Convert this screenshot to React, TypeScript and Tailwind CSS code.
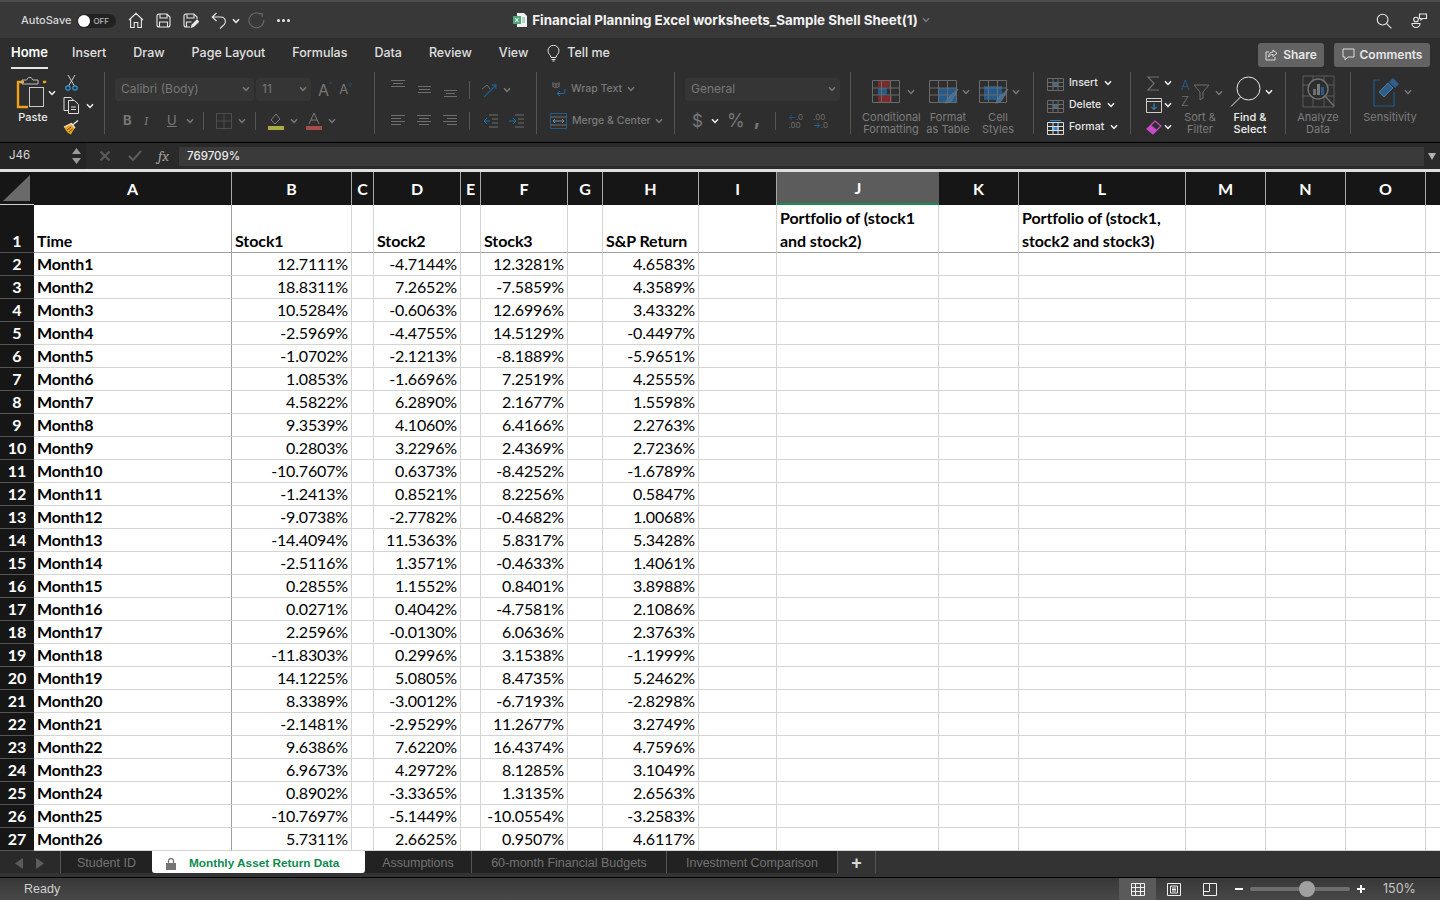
import type { ReactNode } from 'react';

const UI = "font-['Inter',sans-serif]";
const CELL_FONT = "font-['Lato',sans-serif]";

const COLS = [
  { name: 'A', w: 198 },
  { name: 'B', w: 120 },
  { name: 'C', w: 22 },
  { name: 'D', w: 87 },
  { name: 'E', w: 20 },
  { name: 'F', w: 87 },
  { name: 'G', w: 35 },
  { name: 'H', w: 96 },
  { name: 'I', w: 78 },
  { name: 'J', w: 162 },
  { name: 'K', w: 80 },
  { name: 'L', w: 167 },
  { name: 'M', w: 80 },
  { name: 'N', w: 80 },
  { name: 'O', w: 80 },
  { name: '', w: 15 },
];

const DATA: string[][] = [
  ['12.7111', '-4.7144', '12.3281', '4.6583'],
  ['18.8311', '7.2652', '-7.5859', '4.3589'],
  ['10.5284', '-0.6063', '12.6996', '3.4332'],
  ['-2.5969', '-4.4755', '14.5129', '-0.4497'],
  ['-1.0702', '-2.1213', '-8.1889', '-5.9651'],
  ['1.0853', '-1.6696', '7.2519', '4.2555'],
  ['4.5822', '6.2890', '2.1677', '1.5598'],
  ['9.3539', '4.1060', '6.4166', '2.2763'],
  ['0.2803', '3.2296', '2.4369', '2.7236'],
  ['-10.7607', '0.6373', '-8.4252', '-1.6789'],
  ['-1.2413', '0.8521', '8.2256', '0.5847'],
  ['-9.0738', '-2.7782', '-0.4682', '1.0068'],
  ['-14.4094', '11.5363', '5.8317', '5.3428'],
  ['-2.5116', '1.3571', '-0.4633', '1.4061'],
  ['0.2855', '1.1552', '0.8401', '3.8988'],
  ['0.0271', '0.4042', '-4.7581', '2.1086'],
  ['2.2596', '-0.0130', '6.0636', '2.3763'],
  ['-11.8303', '0.2996', '3.1538', '-1.1999'],
  ['14.1225', '5.0805', '8.4735', '5.2462'],
  ['8.3389', '-3.0012', '-6.7193', '-2.8298'],
  ['-2.1481', '-2.9529', '11.2677', '3.2749'],
  ['9.6386', '7.6220', '16.4374', '4.7596'],
  ['6.9673', '4.2972', '8.1285', '3.1049'],
  ['0.8902', '-3.3365', '1.3135', '2.6563'],
  ['-10.7697', '-5.1449', '-10.0554', '-3.2583'],
  ['5.7311', '2.6625', '0.9507', '4.6117'],
];

const HEADERS: Record<string, string> = {
  A: 'Time',
  B: 'Stock1',
  D: 'Stock2',
  F: 'Stock3',
  H: 'S&P Return',
  J: 'Portfolio of (stock1 and stock2)',
  L: 'Portfolio of (stock1, stock2 and stock3)',
};

const RIBBON_TABS = ['Home', 'Insert', 'Draw', 'Page Layout', 'Formulas', 'Data', 'Review', 'View'];

function Chev({ on = false, className = '' }: { on?: boolean; className?: string }) {
  return (
    <svg width="8" height="6" viewBox="0 0 8 6" fill="none" className={className}>
      <path d="M1 1.2 4 4.4 7 1.2" stroke={on ? '#f0f0f0' : '#7a7a7a'} strokeWidth="1.5" />
    </svg>
  );
}

function Sep({ className = 'h-[62px]' }: { className?: string }) {
  return <div className={`w-px shrink-0 bg-[#555555] ${className}`} />;
}

function Lines({ rows, color = '#6e6e6e' }: { rows: number[][]; color?: string }) {
  return (
    <svg width="16" height="14" viewBox="0 0 16 14" fill="none" stroke={color}>
      {rows.map((r, i) => (
        <path key={i} d={`M${r[0]} ${r[2]}.5H${r[1]}`} />
      ))}
    </svg>
  );
}

function RibbonLabel({ children, on = false, className = '' }: { children: ReactNode; on?: boolean; className?: string }) {
  return (
    <div className={`text-center text-[11px] leading-[12px] ${on ? 'font-medium text-[#f0f0f0]' : 'text-[#7d7d7d]'} ${className}`}>
      {children}
    </div>
  );
}

function TitleBar() {
  return (
    <div className="flex h-[38px] shrink-0 items-center border-t-2 border-[#4c4c4c] bg-[#383838] pt-px text-[#e4e4e4]">
      <div className="flex flex-1 items-center pl-[21px]">
        <span className="text-[11px] font-medium text-[#d8d8d8]">AutoSave</span>
        <div className="ml-[6px] flex h-[14px] w-[39px] items-center rounded-full bg-[#222222] pl-px">
          <div className="h-[12px] w-[12px] rounded-full bg-white" />
          <span className="ml-[3px] text-[8px] font-medium text-[#bcbcbc]">OFF</span>
        </div>
        <svg width="16" height="17" viewBox="0 0 16 17" fill="none" stroke="#e8e8e8" strokeWidth="1.1" className="ml-[12px]">
          <path d="M1 8 8 1.3 15 8M2.6 7v8.500h3.600v-5h3.600v5h3.600V7" />
        </svg>
        <svg width="15" height="15" viewBox="0 0 15 15" fill="none" stroke="#e8e8e8" strokeWidth="1.1" className="ml-[12px]">
          <path d="M1 3a2 2 0 0 1 2-2h8l3 3v8a2 2 0 0 1-2 2H3a2 2 0 0 1-2-2zM4 1v4h7V1M3.500 14V9h8v5" />
        </svg>
        <svg width="16" height="15" viewBox="0 0 16 15" fill="none" stroke="#e8e8e8" strokeWidth="1.1" className="ml-[12px]">
          <path d="M7 14H3a2 2 0 0 1-2-2V3a2 2 0 0 1 2-2h8l3 3v2M4 1v4h7V1M3.500 14V9h5" />
          <path d="M8.500 14.200 9 12l5-5 1.600 1.600-5 5z" fill="#e8e8e8" />
        </svg>
        <svg width="16" height="17" viewBox="0 0 16 17" fill="none" stroke="#e8e8e8" strokeWidth="1.1" className="ml-[12px]">
          <path d="M5.500 1 1.200 5l4.300 4M1.500 5H10a4.500 4.500 0 0 1 3.400 7.400L9 16.500" />
        </svg>
        <Chev on className="ml-[5px]" />
        <svg width="17" height="17" viewBox="0 0 17 17" fill="none" stroke="#6a6a6a" strokeWidth="1.1" className="ml-[8px]">
          <path d="M12.500 2.200A7.400 7.400 0 1 0 15.800 8M10.500 1.500h3.600v3.700" />
        </svg>
        <div className="ml-[12px] flex gap-[2px]">
          <div className="h-[3px] w-[3px] rounded-full bg-[#e8e8e8]" />
          <div className="h-[3px] w-[3px] rounded-full bg-[#e8e8e8]" />
          <div className="h-[3px] w-[3px] rounded-full bg-[#e8e8e8]" />
        </div>
      </div>
      <div className="flex items-center pr-[6px]">
        <svg width="14" height="14" viewBox="0 0 14 14">
          <path d="M4 0h7l3 3v11H4z" fill="#f2f2f2" />
          <rect x="0" y="3" width="8" height="8" fill="#4fa57c" />
          <path d="M2 5l3.500 4M5.500 5 2 9" stroke="#fff" />
          <path d="M9 5h3M9 7h3M9 9h3" stroke="#6fb592" />
        </svg>
        <span className="ml-[5px] text-[13.4px] font-bold text-[#f2f2f2]">
          Financial Planning Excel worksheets_Sample Shell Sheet(1)
        </span>
        <Chev className="ml-[4px]" />
      </div>
      <div className="flex flex-1 items-center justify-end pr-[12px]">
        <svg width="16" height="16" viewBox="0 0 16 16" fill="none" stroke="#e8e8e8" strokeWidth="1.1">
          <circle cx="6.600" cy="6.600" r="5.400" />
          <path d="m10.600 10.600 4.800 4.800" />
        </svg>
        <svg width="17" height="17" viewBox="0 0 17 17" fill="none" stroke="#e8e8e8" strokeWidth="1.1" className="ml-[19px]">
          <circle cx="5" cy="7.500" r="2.300" />
          <path d="M1 11.500h8a4 4 0 0 1-8 0zM8.500 2h7v4.500h-4l-1.600 1.400V6.500H8.500z" />
        </svg>
      </div>
    </div>
  );
}

function TabsRow() {
  return (
    <div className="flex h-[30px] shrink-0 items-center bg-[#2e2e2e] pl-[11px] pr-[10px] text-[12.5px] font-medium text-[#e0e0e0]">
      {RIBBON_TABS.map((t, i) => (
        <div key={t} className={`relative ${i === 0 ? 'mr-[24px] text-[13px] font-semibold text-white' : i === 7 ? 'mr-[19px]' : 'mr-[27px]'}`}>
          {t}
          {i === 0 && <div className="absolute -bottom-[6px] left-0 h-[2px] w-full bg-[#e4e4e4]" />}
        </div>
      ))}
      <svg width="13" height="17" viewBox="0 0 13 17" fill="none" stroke="#e0e0e0">
        <path d="M4 12.500C4 10 1 9 1 5.800a5.500 5.500 0 0 1 11 0C12 9 9 10 9 12.500zM4.500 14.500h4M5.500 16h2" />
      </svg>
      <span className="ml-[7px]">Tell me</span>
      <div className="ml-auto flex items-center gap-[10px] pt-[3px]">
        <div className="flex h-[24px] w-[66px] items-center justify-center gap-[5px] rounded-[3px] bg-[#636363] text-[12px] font-semibold text-[#e6e6e6]">
          <svg width="13" height="12" viewBox="0 0 13 12" fill="none" stroke="#dcdcdc">
            <path d="M4 3H1v8h9V8M8 1l4 3.200L8 7.500V5.500C5.500 5.500 4.500 6.500 3.500 8.200 3.500 5.500 5 3 8 3z" />
          </svg>
          Share
        </div>
        <div className="flex h-[24px] w-[96px] items-center justify-center gap-[5px] rounded-[3px] bg-[#636363] text-[12px] font-semibold text-[#e6e6e6]">
          <svg width="13" height="13" viewBox="0 0 13 13" fill="none" stroke="#dcdcdc">
            <path d="M1 1h11v8H6l-3 3V9H1z" />
          </svg>
          Comments
        </div>
      </div>
    </div>
  );
}

function Clipboard() {
  return (
    <div className="flex w-[104px] shrink-0 pl-[16px]">
      <div className="flex w-[46px] flex-col pt-[4px]">
        <div className="flex items-center">
          <svg width="33" height="33" viewBox="0 0 33 33" fill="none">
            <path d="M8 6H2v25h10" stroke="#eea21a" strokeWidth="2.400" />
            <path d="M27 6h2v1" stroke="#eea21a" strokeWidth="2.400" />
            <path d="M6 8V4h4.500l2-2.500h2.500l2 2.500h5v4z" stroke="#bdbdbd" />
            <rect x="13.500" y="11.500" width="14" height="19" stroke="#c8c8c8" fill="#2d2d2d" />
          </svg>
          <Chev on className="-ml-[1px]" />
        </div>
        <div className="w-[34px] text-center text-[11px] font-medium text-[#ececec]">Paste</div>
      </div>
      <div className="flex flex-col gap-[6px] pl-[1px] pt-[3px]">
        <svg width="18" height="16" viewBox="0 0 18 16" fill="none">
          <path d="M5 0l6.500 11M12 0 5.500 11" stroke="#d0d0d0" />
          <circle cx="5" cy="13" r="2.200" stroke="#2f9ae0" strokeWidth="1.200" />
          <circle cx="12" cy="13" r="2.200" stroke="#2f9ae0" strokeWidth="1.200" />
        </svg>
        <div className="flex items-center">
          <svg width="18" height="17" viewBox="0 0 18 17" fill="none" stroke="#dcdcdc">
            <path d="M5.500 13.500H1V.5h7l2 2.500M5.500 3.500h6l4 4v9h-10zM8 10h5M8 12.500h5" />
          </svg>
          <Chev on className="ml-[5px]" />
        </div>
        <svg width="16" height="15" viewBox="0 0 16 15" fill="none">
          <path d="M1 7 8.500 3.500 12 8c-2 2.500-3 4.500-4 6.500C5 13.500 3 11 1 7z" fill="#eea21a" />
          <path d="M1 7 8.500 3.500 12 8M9.500 5 15 .5" stroke="#e6e6e6" strokeWidth="1.300" />
          <path d="M4 10l4-3M6 12l3.500-3" stroke="#2d2d2d" strokeWidth=".8" />
        </svg>
      </div>
    </div>
  );
}

function FontGroup() {
  return (
    <div className="flex w-[259px] shrink-0 flex-col pt-[6px] text-[#787878]">
      <div className="flex items-center">
        <div className="flex h-[23px] w-[139px] items-center justify-between rounded-[3px] bg-[#353535] pb-px pl-[6px] pr-[4px] text-[12px]">
          Calibri (Body) <Chev />
        </div>
        <div className="ml-[2px] flex h-[23px] w-[55px] items-center justify-between rounded-[3px] bg-[#353535] pb-px pl-[6px] pr-[4px] text-[12px]">
          11 <Chev />
        </div>
        <span className="ml-[7px] text-[16px] leading-none">A</span>
        <span className="-mt-[8px] text-[7px] text-[#1f5c8a]">^</span>
        <span className="ml-[7px] text-[13px] leading-none">A</span>
        <span className="-mt-[8px] text-[7px] text-[#1f5c8a]">v</span>
      </div>
      <div className="mt-[11px] flex h-[18px] items-center text-[13px]">
        <span className="ml-[8px] w-[15px] font-bold">B</span>
        <span className="ml-[6px] w-[15px] font-serif italic">I</span>
        <span className="ml-[8px] underline">U</span>
        <Chev className="ml-[9px]" />
        <Sep className="ml-[9px] h-[18px]" />
        <svg width="16" height="16" viewBox="0 0 16 16" fill="none" stroke="#6a6a6a" strokeDasharray="1 1" className="ml-[12px]">
          <path d="M.5.5h15v15H.5zM8 .5v15M.5 8h15" />
        </svg>
        <Chev className="ml-[6px]" />
        <Sep className="ml-[9px] h-[18px]" />
        <svg width="16" height="18" viewBox="0 0 16 18" fill="none" className="ml-[12px]">
          <path d="m3 8 5-6 4 5-5 5z" stroke="#7a7a7a" />
          <rect y="14" width="16" height="4" fill="#aeab45" />
        </svg>
        <Chev className="ml-[6px]" />
        <svg width="16" height="18" viewBox="0 0 16 18" className="ml-[8px]">
          <path d="M3 12 8 1l5 11M5 8h6" fill="none" stroke="#7a7a7a" />
          <rect y="14" width="16" height="4" fill="#ad4a4a" />
        </svg>
        <Chev className="ml-[6px]" />
      </div>
    </div>
  );
}

function AlignGroup() {
  return (
    <div className="flex w-[151px] shrink-0 flex-col pl-[5px] pt-[6px]">
      <div className="flex h-[23px] items-center">
        <div className="-mt-[8px]"><Lines rows={[[1, 15, 1], [3, 13, 4], [1, 15, 7]]} /></div>
        <div className="ml-[10px]"><Lines rows={[[2, 15, 3], [3, 14, 6], [2, 15, 9]]} /></div>
        <div className="ml-[10px] mt-[4px]"><Lines rows={[[2, 15, 5], [4, 13, 8], [2, 15, 11]]} /></div>
        <Sep className="ml-[11px] h-[18px]" />
        <svg width="17" height="16" viewBox="0 0 17 16" fill="none" className="ml-[11px]">
          <path d="M1 7l5-4 3 4" stroke="#6e6e6e" />
          <path d="M3 15 15 3M11 3h4v4" stroke="#1f5c8a" strokeWidth="1.300" />
        </svg>
        <Chev className="ml-[5px]" />
      </div>
      <div className="mt-[11px] flex h-[18px] items-center">
        <Lines rows={[[1, 15, 1], [1, 11, 4], [1, 15, 7], [1, 11, 10]]} />
        <div className="ml-[10px]"><Lines rows={[[1, 15, 1], [3, 13, 4], [1, 15, 7], [3, 13, 10]]} /></div>
        <div className="ml-[10px]"><Lines rows={[[1, 15, 1], [5, 15, 4], [1, 15, 7], [5, 15, 10]]} /></div>
        <Sep className="ml-[11px] h-[18px]" />
        <svg width="15" height="14" viewBox="0 0 15 14" fill="none" className="ml-[13px]">
          <path d="M6 1h9M9 5h6M9 9h6M6 13h9" stroke="#6e6e6e" />
          <path d="M7 7H1M4 4 1 7l3 3" stroke="#1f6fa8" />
        </svg>
        <svg width="15" height="14" viewBox="0 0 15 14" fill="none" className="ml-[11px]">
          <path d="M6 1h9M9 5h6M9 9h6M6 13h9" stroke="#6e6e6e" />
          <path d="M0 7h6M4 4l3 3-3 3" stroke="#1f6fa8" />
        </svg>
      </div>
    </div>
  );
}

function WrapGroup() {
  return (
    <div className="flex w-[124px] shrink-0 flex-col pt-[7px] text-[10.5px] font-medium text-[#7a7a7a]">
      <div className="flex h-[20px] items-center">
        <svg width="16" height="16" viewBox="0 0 16 16" fill="none" className="ml-[1px]">
          <path d="M2 6V1M2 4a2 2 0 1 1 0 1M8 1v5M8 4a2 2 0 1 0 0 1" stroke="#6e6e6e" />
          <path d="M14 8v2.500a2 2 0 0 1-2 2H7M9 10l-3 2.500L9 15" stroke="#1f6fa8" />
        </svg>
        <span className="ml-[4px]">Wrap Text</span>
        <Chev className="ml-[5px]" />
      </div>
      <div className="mt-[12px] flex h-[20px] items-center">
        <svg width="17" height="16" viewBox="0 0 17 16" fill="none">
          <path d="M.5.500h16v15H.5z" stroke="#1f5c8a" />
          <path d="M.5 4h16M.5 12h16" stroke="#6e6e6e" />
          <path d="M3 8h11M5 6 3 8l2 2M12 6l2 2-2 2" stroke="#6e8fa8" />
        </svg>
        <span className="ml-[5px]">Merge & Center</span>
        <Chev className="ml-[4px]" />
      </div>
    </div>
  );
}

function NumberGroup() {
  return (
    <div className="flex w-[165px] shrink-0 flex-col pt-[6px] text-[#787878]">
      <div className="flex h-[23px] w-[155px] items-center justify-between rounded-[3px] bg-[#353535] pb-px pl-[6px] pr-[4px] text-[12px]">
        General <Chev />
      </div>
      <div className="mt-[11px] flex h-[18px] items-center">
        <span className="ml-[7px] w-[12px] text-[17px] leading-none">$</span>
        <Chev on className="ml-[7px]" />
        <span className="ml-[8px] text-[18px] leading-none">%</span>
        <span className="ml-[9px] -mt-[6px] text-[20px] font-bold leading-[14px]">,</span>
        <Sep className="ml-[15px] h-[18px]" />
        <span className="ml-[12px] text-[8px] leading-[8px] text-[#6e6e6e]">
          <span className="text-[#1f5c8a]">←</span>.0<br />.00
        </span>
        <span className="ml-[10px] text-[8px] leading-[8px] text-[#6e6e6e]">
          .00<br /><span className="text-[#1f6fa8]">→</span>.0
        </span>
      </div>
    </div>
  );
}

function GridIcon({ kind }: { kind: 'cond' | 'table' | 'cell' }) {
  return (
    <svg width="30" height="24" viewBox="0 0 30 24" fill="none">
      {kind === 'cond' && (
        <>
          <rect x="6" y="1" width="12" height="6" fill="#7c2a2c" />
          <rect x="6" y="8" width="9" height="7" fill="#2a5a88" />
          <rect x="6" y="16" width="14" height="7" fill="#7c2a2c" />
        </>
      )}
      {kind === 'table' && <rect x="10" y="8" width="18" height="14" fill="#245a8c" />}
      {kind === 'cell' && <rect x="5" y="6" width="18" height="14" fill="#245a8c" />}
      <path d="M.5.5h27v22H.5zM.5 8h27M.5 15h27M9.500.5v22M18.500.5v22" stroke="#6a6a6a" />
      {kind !== 'cond' && <path d="M29 9 19 18c-1 1-1 3-3 5 3 0 6-1 7-3z" fill="#3d7199" stroke="#7a7a7a" strokeWidth=".7" />}
    </svg>
  );
}

function StylesGroup() {
  return (
    <div className="flex w-[182px] shrink-0 pl-[11px] pt-[8px]">
      <div className="flex w-[65px] flex-col items-start">
        <div className="ml-[10px] flex items-center"><GridIcon kind="cond" /><Chev className="ml-[5px]" /></div>
        <RibbonLabel className="mt-[7px] w-[58px]">Conditional Formatting</RibbonLabel>
      </div>
      <div className="flex w-[52px] flex-col items-start">
        <div className="ml-[2px] flex items-center"><GridIcon kind="table" /><Chev className="ml-[3px]" /></div>
        <RibbonLabel className="-ml-[2px] mt-[7px] w-[46px]">Format as Table</RibbonLabel>
      </div>
      <div className="flex w-[52px] flex-col items-start">
        <div className="flex items-center"><GridIcon kind="cell" /><Chev className="ml-[3px]" /></div>
        <RibbonLabel className="mt-[7px] w-[38px]">Cell Styles</RibbonLabel>
      </div>
    </div>
  );
}

function CellsGroup() {
  const rows = [
    { label: 'Insert', color: '#3f6d92', on: false },
    { label: 'Delete', color: '#3f6d92', on: false },
    { label: 'Format', color: '#1e8ae6', on: true },
  ];
  return (
    <div className="flex w-[83px] shrink-0 flex-col gap-[6px] pt-[3px]">
      {rows.map((r) => (
        <div key={r.label} className="flex h-[16px] items-center text-[10.5px] font-medium text-[#e6e6e6]">
          <svg width="17" height="15" viewBox="0 0 17 15" fill="none" stroke={r.on ? '#dcdcdc' : '#6a6a6a'}>
            <path d="M.5 2.500h16v12H.5zM.5 6.500h16M.5 10.500h16M6 2.500v12M11 2.500v12" />
            <rect x="6" y="6.500" width="5" height="4" fill={r.color} />
            {r.on && <path d="M3 .5h11" stroke="#1e8ae6" />}
          </svg>
          <span className="ml-[5px]">{r.label}</span>
          <Chev on className="ml-[6px]" />
        </div>
      ))}
    </div>
  );
}

function EditingGroup() {
  return (
    <div className="flex w-[142px] shrink-0 pt-[3px]">
      <div className="ml-[3px] flex w-[35px] flex-col gap-[6px]">
        <div className="flex h-[16px] items-center">
          <svg width="16" height="15" viewBox="0 0 16 15" fill="none" stroke="#6e6e6e" strokeWidth="1.200">
            <path d="M13 1H2l6 6.500L2 14h11" />
          </svg>
          <Chev on className="ml-[2px]" />
        </div>
        <div className="flex h-[16px] items-center">
          <svg width="16" height="15" viewBox="0 0 16 15" fill="none">
            <path d="M.5.500h15v14H.5zM.5 3.500h15" stroke="#cfcfcf" />
            <path d="M8 5.500v6M5.500 9 8 11.500 10.500 9" stroke="#2f9ae0" />
          </svg>
          <Chev on className="ml-[2px]" />
        </div>
        <div className="flex h-[16px] items-center">
          <svg width="16" height="15" viewBox="0 0 16 15" fill="none">
            <path d="m1 9 8-8 6 5-8 8z" stroke="#c94bc9" strokeWidth="1.200" />
            <path d="m1 9 4-4 6 5-4 4z" fill="#c94bc9" />
          </svg>
          <Chev on className="ml-[2px]" />
        </div>
      </div>
      <div className="flex w-[49px] flex-col">
        <div className="flex h-[33px] items-center pt-[2px]">
          <span className="flex w-[12px] flex-col text-[13px] font-light leading-[16px]">
            <span className="text-[#2a5a88]">A</span>
            <span className="text-[#6e6e6e]">Z</span>
          </span>
          <svg width="17" height="17" viewBox="0 0 17 17" fill="none" stroke="#6e6e6e">
            <path d="M1 1h15L10 8v6l-3 2V8z" />
          </svg>
          <Chev className="ml-[5px]" />
        </div>
        <RibbonLabel className="mt-[3px] w-[38px] whitespace-nowrap">Sort &<br />Filter</RibbonLabel>
      </div>
      <div className="flex flex-col">
        <div className="flex h-[33px] items-center">
          <svg width="31" height="31" viewBox="0 0 31 31" fill="none" stroke="#e8e8e8">
            <circle cx="18.500" cy="12.500" r="11.500" />
            <path d="M10.500 21 1 30.500" />
          </svg>
          <Chev on className="ml-[4px]" />
        </div>
        <RibbonLabel on className="mt-[3px] w-[40px] whitespace-nowrap">Find &<br />Select</RibbonLabel>
      </div>
    </div>
  );
}

function AnalyzeGroup() {
  return (
    <div className="flex w-[64px] shrink-0 flex-col items-center pt-[3px]">
      <svg width="33" height="33" viewBox="0 0 33 33" fill="none">
        <path d="M1 1h31v31H1zM1 10h31M1 21h31M11 1v31M22 1v31" stroke="#5a5a5a" />
        <circle cx="16" cy="14" r="10" stroke="#707070" strokeWidth="1.500" fill="#2d2d2d" />
        <rect x="11" y="14" width="3" height="6" fill="#707070" />
        <rect x="15" y="9" width="3" height="11" fill="#7a7a7a" />
        <rect x="19" y="12" width="3" height="8" fill="#2a5a88" />
        <path d="m23 21 9 10" stroke="#707070" strokeWidth="1.500" />
      </svg>
      <RibbonLabel className="mt-[3px]">Analyze<br />Data</RibbonLabel>
    </div>
  );
}

function SensitivityGroup() {
  return (
    <div className="flex w-[78px] flex-col items-start pl-[10px] pt-[3px]">
      <div className="flex h-[33px] items-center pl-[12px]">
        <svg width="28" height="30" viewBox="0 0 28 30" fill="none">
          <path d="M7 3H1v26h20V15" stroke="#1f5c8a" strokeWidth="1.200" />
          <path d="m6 15 9-9 5 5-9 9z" fill="#2d5f88" stroke="#4b7ea6" />
          <path d="m16 5 4-4 6 6-4 4z" fill="#2d5f88" />
        </svg>
        <Chev className="ml-[3px]" />
      </div>
      <RibbonLabel className="mt-[3px] w-[58px]">Sensitivity</RibbonLabel>
    </div>
  );
}

function Ribbon() {
  return (
    <div className="flex h-[74px] shrink-0 items-start bg-[#2e2e2e] pt-[4px]">
      <Clipboard />
      <Sep />
      <div className="w-[10px] shrink-0" />
      <FontGroup />
      <Sep />
      <div className="w-[10px] shrink-0" />
      <AlignGroup />
      <Sep />
      <div className="w-[13px] shrink-0" />
      <WrapGroup />
      <Sep />
      <div className="w-[10px] shrink-0" />
      <NumberGroup />
      <Sep />
      <StylesGroup />
      <Sep />
      <div className="w-[13px] shrink-0" />
      <CellsGroup />
      <Sep />
      <div className="w-[12px] shrink-0" />
      <EditingGroup />
      <Sep />
      <AnalyzeGroup />
      <Sep />
      <SensitivityGroup />
    </div>
  );
}

function FormulaBar() {
  return (
    <div className="flex h-[27px] shrink-0 items-center border-t border-black bg-[#2a2a2a]">
      <div className="flex h-full w-[86px] items-center justify-between bg-[#252525] pl-[9px] pr-[5px] text-[11.5px] text-[#d8d8d8]">
        J46
        <svg width="9" height="16" viewBox="0 0 9 16" fill="#9a9a9a">
          <path d="M4.500 0 9 6H0zM4.500 16 0 10h9z" />
        </svg>
      </div>
      <svg width="12" height="12" viewBox="0 0 12 12" stroke="#5c5c5c" strokeWidth="2" className="ml-[13px]">
        <path d="m1.500 1.500 9 9M10.500 1.500l-9 9" />
      </svg>
      <svg width="14" height="12" viewBox="0 0 14 12" fill="none" stroke="#5c5c5c" strokeWidth="2" className="ml-[17px]">
        <path d="m1 6 4 4 8-9" />
      </svg>
      <span className="ml-[16px] w-[18px] font-serif text-[15px] italic leading-none text-[#a0a0a0]">fx</span>
      <div className="ml-[3px] flex h-[19px] w-[1245px] items-center bg-[#3a3a3a] pl-[8px] pt-px text-[11.5px] font-medium text-[#ececec]">
        769709%
      </div>
      <svg width="8" height="7" viewBox="0 0 8 7" fill="#b0b0b0" className="ml-[4px]">
        <path d="M0 0h8L4 7z" />
      </svg>
    </div>
  );
}

function Sheet() {
  const gridCols = `34px ${COLS.map((c) => `${c.w}px`).join(' ')}`;
  const rowTemplate = `33px 48px repeat(${DATA.length}, 23px)`;

  return (
    <div
      className={`grid h-[682px] shrink-0 overflow-hidden border-t-[3px] border-[#dedede] bg-white text-black ${CELL_FONT} text-[16px] leading-[22px]`}
      style={{ gridTemplateColumns: gridCols, gridTemplateRows: rowTemplate }}
    >
      <div className="flex items-end border-b border-[#cfcfcf] bg-[#161616] p-[3px]">
        <svg width="27" height="26" viewBox="0 0 27 26">
          <path d="M27 0v26H0z" fill="#6a6a6a" />
        </svg>
      </div>
      {COLS.map((c) =>
        c.name === 'J' ? (
          <div key={c.name} className="flex items-center justify-center border-b-2 border-[#1c8a55] bg-[#5c5c5c] font-bold text-white">
            {c.name}
          </div>
        ) : (
          <div key={c.name || 'end'} className="flex items-center justify-center border-r border-[#a8a8a8] bg-[#161616] font-bold text-white">
            {c.name}
          </div>
        ),
      )}

      <div className="flex items-end justify-center border-b border-[#555555] bg-[#161616] font-bold text-white">1</div>
      {COLS.map((c) => (
        <div
          key={c.name || 'end'}
          className={`flex items-end border-b border-[#a0a0a0] pl-[3px] font-bold ${c.name === 'A' ? 'border-r border-r-[#a0a0a0]' : 'border-r border-r-[#d4d4d4]'}`}
        >
          <span className="leading-[23px] tracking-[-0.005em]">{HEADERS[c.name]}</span>
        </div>
      ))}

      {DATA.map((row, r) => {
        let next = 0;
        return [
          <div key={`h${r}`} className="flex items-center justify-center border-b border-[#555555] bg-[#161616] font-bold text-white">
            {r + 2}
          </div>,
          ...COLS.map((c) => {
            const isValue = ['B', 'D', 'F', 'H'].includes(c.name);
            const value = isValue ? row[next++] : '';
            return (
              <div
                key={`${r}${c.name}`}
                className={`flex items-center border-b border-[#d4d4d4] px-[3px] tracking-[-0.01em] ${c.name === 'A' ? 'border-r border-r-[#a0a0a0] font-bold' : 'border-r border-r-[#d4d4d4]'} ${isValue ? 'justify-end' : ''}`}
              >
                {c.name === 'A' ? `Month${r + 1}` : isValue ? `${value}%` : ''}
              </div>
            );
          }),
        ];
      })}
    </div>
  );
}

function SheetTabs() {
  const plain = 'flex h-[22px] items-center justify-center border-r border-[#555555] pt-[3px] text-[#737373]';
  return (
    <div className="flex h-[27px] shrink-0 items-start border-b border-black bg-[#333333] font-['Liberation_Sans',sans-serif] text-[12.5px]">
      <div className="flex h-[22px] w-[61px] items-center gap-[13px] border-r border-[#555555] bg-[#2a2a2a] pl-[15px] pt-[3px]">
        <svg width="8" height="11" viewBox="0 0 8 11" fill="#5c5c5c"><path d="M8 0v11L0 5.500z" /></svg>
        <svg width="8" height="11" viewBox="0 0 8 11" fill="#5c5c5c"><path d="M0 0v11l8-5.500z" /></svg>
      </div>
      <div className="flex h-[22px] w-[91px] items-center justify-center bg-[#222222] pt-[3px] text-[#737373]">Student ID</div>
      <div className="flex h-[22px] w-[213px] items-center gap-[13px] rounded-b-[3px] bg-white pl-[14px] pt-[3px] text-[11.8px] font-bold text-[#0e8a4f]">
        <svg width="10" height="12" viewBox="0 0 10 12" fill="#757575">
          <path d="M0 5h10v7H0z" />
          <path d="M2.500 5V3a2.500 2.500 0 0 1 5 0v2" fill="none" stroke="#757575" strokeWidth="1.300" />
        </svg>
        Monthly Asset Return Data
      </div>
      <div className={`w-[107px] bg-[#222222] ${plain}`}>Assumptions</div>
      <div className={`w-[195px] bg-[#222222] ${plain}`}>60-month Financial Budgets</div>
      <div className={`w-[171px] bg-[#222222] ${plain}`}>Investment Comparison</div>
      <div className="flex h-[22px] w-[38px] items-center justify-center border-r border-[#555555] pt-[3px] text-[18px] font-bold text-[#d8d8d8]">+</div>
    </div>
  );
}

function StatusBar() {
  return (
    <div className="flex h-[22px] shrink-0 items-center bg-gradient-to-b from-[#383838] to-[#484848] pl-[24px] font-['Liberation_Sans',sans-serif] text-[12.5px] text-[#d0d0d0]">
      Ready
      <div className="ml-auto flex h-full items-center">
        <div className="flex h-full w-[37px] items-center justify-center bg-[#5a5a5a]">
          <svg width="14" height="13" viewBox="0 0 14 13" fill="none" stroke="#f0f0f0">
            <path d="M.5.500h13v12H.5zM.5 4.500h13M.5 8.500h13M4.500.5v12M9.500.5v12" />
          </svg>
        </div>
        <div className="flex h-full w-[36px] items-center justify-center">
          <svg width="14" height="13" viewBox="0 0 14 13" fill="none" stroke="#f0f0f0">
            <path d="M.5.500h13v12H.5zM3.500 3h7v7h-7zM5 5h4M5 6.500h4M5 8h4" />
          </svg>
        </div>
        <div className="flex h-full w-[36px] items-center justify-center">
          <svg width="14" height="13" viewBox="0 0 14 13" fill="none" stroke="#f0f0f0">
            <path d="M.5.500h13v12H.5zM.5 8.500h6V.5" />
          </svg>
        </div>
        <div className="ml-[7px] h-[2px] w-[8px] bg-white" />
        <div className="relative ml-[7px] flex h-[16px] w-[100px] items-center">
          <div className="h-[4px] w-full rounded-full bg-[#6e6e6e]" />
          <div className="absolute left-[49px] h-[16px] w-[16px] rounded-full bg-[#a0a0a0]" />
        </div>
        <div className="relative ml-[7px] h-[8px] w-[8px]">
          <div className="absolute top-[3px] h-[2px] w-[8px] bg-white" />
          <div className="absolute left-[3px] h-[8px] w-[2px] bg-white" />
        </div>
        <span className={`ml-[18px] w-[57px] ${UI} text-[12.5px] text-[#c8c8c8]`}>150%</span>
      </div>
    </div>
  );
}

export default function App() {
  return (
    <div className={`flex h-[900px] w-[1440px] flex-col overflow-hidden bg-[#2e2e2e] ${UI}`}>
      <TitleBar />
      <TabsRow />
      <Ribbon />
      <FormulaBar />
      <Sheet />
      <SheetTabs />
      <StatusBar />
    </div>
  );
}
